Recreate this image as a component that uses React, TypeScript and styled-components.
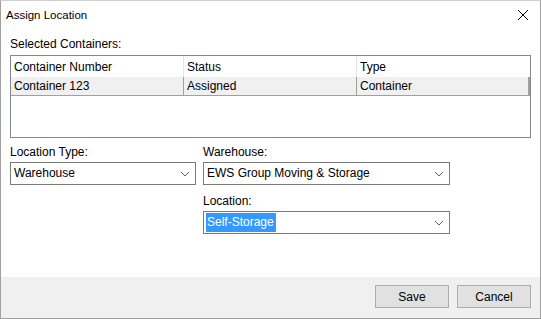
import styled, { createGlobalStyle } from "styled-components";

const GlobalStyle = createGlobalStyle`
  html, body {
    margin: 0;
    padding: 0;
    background: #ffffff;
  }
  * {
    box-sizing: border-box;
  }
`;

const Dialog = styled.div`
  width: 541px;
  height: 319px;
  display: flex;
  flex-direction: column;
  background: #ffffff;
  border: 1px solid #a0a0a0;
  border-top-color: #d0d0d0;
  font-family: "Liberation Sans", Arial, sans-serif;
  font-size: 12px;
  color: #000000;
`;

const TitleBar = styled.div`
  height: 28px;
  display: flex;
  align-items: center;
  justify-content: space-between;
  padding: 0 10px 0 5px;
`;

const Title = styled.span`
  font-size: 11.5px;
`;

const CloseButton = styled.div`
  width: 14px;
  height: 14px;
  display: flex;
  align-items: center;
  justify-content: center;
`;

const Body = styled.div`
  flex: 1;
  padding: 8px 9px 0 9px;
  display: flex;
  flex-direction: column;
`;

const Label = styled.div`
  height: 14px;
  line-height: 14px;
  margin-bottom: 3px;
`;

const ListBox = styled.div`
  height: 83px;
  border: 1px solid #828790;
  margin-top: 1px;
  margin-bottom: 7px;
  background: #ffffff;
`;

const Row = styled.div<{ $header?: boolean }>`
  display: grid;
  grid-template-columns: 173px 173px 1fr;
  height: ${(p) => (p.$header ? "21px" : "19px")};
  background: ${(p) => (p.$header ? "#ffffff" : "#f0f0f0")};
  border-bottom: ${(p) => (p.$header ? "none" : "1px solid #a0a0a0")};
  border-right: ${(p) => (p.$header ? "none" : "2px solid #a0a0a0")};
`;

const Cell = styled.div<{ $header?: boolean; $last?: boolean }>`
  display: flex;
  align-items: center;
  padding-left: 3px;
  white-space: nowrap;
  border-right: ${(p) =>
    p.$last ? "none" : p.$header ? "1px solid #e5e5e5" : "1px solid #a0a0a0"};
`;

const Fields = styled.div`
  display: grid;
  grid-template-columns: 186px 247px;
  column-gap: 7px;
  row-gap: 9px;
`;

const Field = styled.div`
  display: flex;
  flex-direction: column;
`;

const Select = styled.div`
  height: 23px;
  border: 1px solid #7a7a7a;
  display: flex;
  align-items: center;
  justify-content: space-between;
  padding: 0 5px 0 2px;
  background: #ffffff;
`;

const Value = styled.span<{ $selected?: boolean }>`
  padding: 2px 1px;
  line-height: 15px;
  background: ${(p) => (p.$selected ? "#3399ff" : "transparent")};
  color: ${(p) => (p.$selected ? "#ffffff" : "#000000")};
  border-right: ${(p) => (p.$selected ? "1px solid #cc7a33" : "none")};
`;

const Footer = styled.div`
  height: 41px;
  background: #f0f0f0;
  display: flex;
  justify-content: flex-end;
  align-items: flex-start;
  gap: 8px;
  padding: 8px 9px 0 0;
`;

const Button = styled.button`
  width: 74px;
  height: 23px;
  background: #e1e1e1;
  border: 1px solid #adadad;
  font-family: "Liberation Sans", Arial, sans-serif;
  font-size: 12px;
  color: #000000;
  padding: 0;
`;

const Chevron = () => (
  <svg width="10" height="6" viewBox="0 0 10 6">
    <path d="M1 1 L5 5 L9 1" fill="none" stroke="#606060" strokeWidth="1" />
  </svg>
);

export default function App() {
  return (
    <>
      <GlobalStyle />
      <Dialog>
        <TitleBar>
          <Title>Assign Location</Title>
          <CloseButton>
            <svg width="12" height="12" viewBox="0 0 12 12">
              <path d="M1 1 L11 11 M11 1 L1 11" stroke="#000" strokeWidth="1" />
            </svg>
          </CloseButton>
        </TitleBar>
        <Body>
          <Label>Selected Containers:</Label>
          <ListBox>
            <Row $header>
              <Cell $header>Container Number</Cell>
              <Cell $header>Status</Cell>
              <Cell $header $last>Type</Cell>
            </Row>
            <Row>
              <Cell>Container 123</Cell>
              <Cell>Assigned</Cell>
              <Cell $last>Container</Cell>
            </Row>
          </ListBox>
          <Fields>
            <Field>
              <Label>Location Type:</Label>
              <Select>
                <Value>Warehouse</Value>
                <Chevron />
              </Select>
            </Field>
            <Field>
              <Label>Warehouse:</Label>
              <Select>
                <Value>EWS Group Moving &amp; Storage</Value>
                <Chevron />
              </Select>
            </Field>
            <div />
            <Field>
              <Label>Location:</Label>
              <Select>
                <Value $selected>Self-Storage</Value>
                <Chevron />
              </Select>
            </Field>
          </Fields>
        </Body>
        <Footer>
          <Button>Save</Button>
          <Button>Cancel</Button>
        </Footer>
      </Dialog>
    </>
  );
}
